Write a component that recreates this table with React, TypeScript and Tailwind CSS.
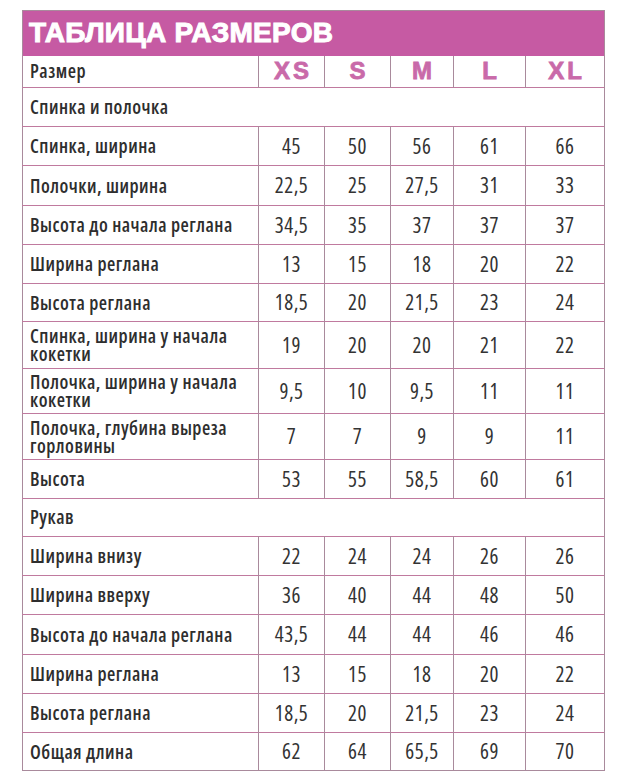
const sizes = ['XS', 'S', 'M', 'L', 'XL']

type Row = { label: string; values?: string[]; h: string; section?: boolean }

const rows: Row[] = [
  { label: 'Спинка и полочка', section: true, h: 'h-[39px]' },
  { label: 'Спинка, ширина', values: ['45', '50', '56', '61', '66'], h: 'h-[39px]' },
  { label: 'Полочки, ширина', values: ['22,5', '25', '27,5', '31', '33'], h: 'h-[40px]' },
  { label: 'Высота до начала реглана', values: ['34,5', '35', '37', '37', '37'], h: 'h-[39px]' },
  { label: 'Ширина реглана', values: ['13', '15', '18', '20', '22'], h: 'h-[39px]' },
  { label: 'Высота реглана', values: ['18,5', '20', '21,5', '23', '24'], h: 'h-[38px]' },
  { label: 'Спинка, ширина у начала кокетки', values: ['19', '20', '20', '21', '22'], h: 'h-[47px]' },
  { label: 'Полочка, ширина у начала кокетки', values: ['9,5', '10', '9,5', '11', '11'], h: 'h-[45px]' },
  { label: 'Полочка, глубина выреза горловины', values: ['7', '7', '9', '9', '11'], h: 'h-[46px]' },
  { label: 'Высота', values: ['53', '55', '58,5', '60', '61'], h: 'h-[39px]' },
  { label: 'Рукав', section: true, h: 'h-[38px]' },
  { label: 'Ширина внизу', values: ['22', '24', '24', '26', '26'], h: 'h-[39px]' },
  { label: 'Ширина вверху', values: ['36', '40', '44', '48', '50'], h: 'h-[39px]' },
  { label: 'Высота до начала реглана', values: ['43,5', '44', '44', '46', '46'], h: 'h-[40px]' },
  { label: 'Ширина реглана', values: ['13', '15', '18', '20', '22'], h: 'h-[39px]' },
  { label: 'Высота реглана', values: ['18,5', '20', '21,5', '23', '24'], h: 'h-[39px]' },
  { label: 'Общая длина', values: ['62', '64', '65,5', '69', '70'], h: 'h-[38px]' },
]

const colW = ['w-[236px]', 'w-[66px]', 'w-[66px]', 'w-[63px]', 'w-[72px]', 'w-[79px]']

// condensed text: Open Sans Condensed face, DejaVu condensed as fallback
const narrow = { fontFamily: '"Open Sans", "DejaVu Sans Condensed", sans-serif' }
const heavy = { fontFamily: '"Liberation Sans", Arial, sans-serif' }

export default function App() {
  return (
    <div className="min-h-[784px] w-[617px] bg-white pl-[22px] pt-[10px]">
      <table className="w-[582px] table-fixed border-collapse border border-[#a98a9c] font-stretch-[75%]" style={narrow}>
        <colgroup>
          {colW.map((w, i) => (
            <col key={i} className={w} />
          ))}
        </colgroup>
        <thead>
          <tr className="h-[45px] bg-[#c65aa3]">
            <th colSpan={6} className="px-[6px] text-left align-middle leading-none">
              <span
                className="text-[28px] font-bold uppercase leading-none tracking-[0.3px] text-white [-webkit-text-stroke:1px_white]"
                style={heavy}
              >
                Таблица размеров
              </span>
            </th>
          </tr>
          <tr className="h-[32px]">
            <th className="border-r border-[#a98a9c] pl-[7px] text-left text-[19px] font-semibold leading-none tracking-[0.5px] text-[#2e2e2e]">
              Размер
            </th>
            {sizes.map((s) => (
              <th
                key={s}
                className="border-x border-[#a98a9c] pl-[3px] text-center text-[24px] font-bold leading-none tracking-[3px] text-[#c96aa9] [-webkit-text-stroke:0.8px_#c96aa9]"
                style={heavy}
              >
                {s}
              </th>
            ))}
          </tr>
        </thead>
        <tbody>
          {rows.map((r, i) =>
            r.section ? (
              <tr key={i} className={`${r.h} border-t border-[#c07a9f]`}>
                <td colSpan={6} className="pl-[7px] text-[19px] font-semibold leading-none tracking-[0.5px] text-[#2e2e2e]">
                  {r.label}
                </td>
              </tr>
            ) : (
              <tr key={i} className={`${r.h} border-t border-[#c07a9f]`}>
                <td className="border-r border-[#a98a9c] pl-[7px] pr-[8px] text-[19px] font-semibold leading-[18px] tracking-[0.5px] text-[#2e2e2e]">
                  {r.label}
                </td>
                {r.values!.map((v, j) => (
                  <td key={j} className="border-x border-[#a98a9c] text-center text-[21px] font-normal leading-none tracking-[0.5px] text-[#333]">
                    {v}
                  </td>
                ))}
              </tr>
            ),
          )}
        </tbody>
      </table>
    </div>
  )
}
